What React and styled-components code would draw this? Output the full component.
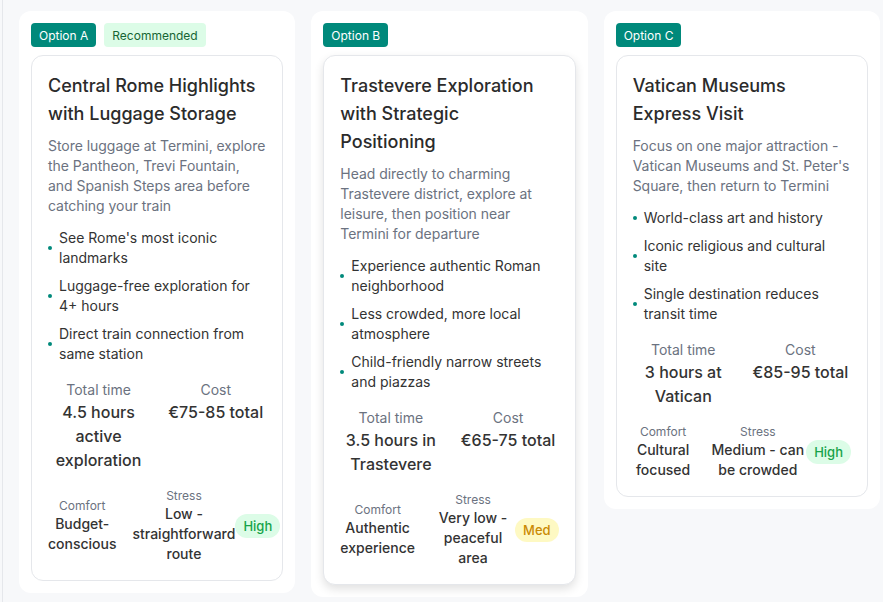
import React from 'react';
import styled, { createGlobalStyle } from 'styled-components';

const GlobalStyle = createGlobalStyle`
    * {
        box-sizing: border-box;
    }

    body {
        margin: 0;
        background: #f7f8fa;
        font-family: Inter, "Noto Sans", sans-serif;
        color: #2b2b2b;
    }
`;

const Board = styled.div`
    margin-left: 2px;
    border-left: 1px solid #e5e7eb;
    padding: 11px 3px 6px 16px;
    min-height: 602px;
    display: grid;
    grid-template-columns: repeat(3, minmax(0, 1fr));
    gap: 16px;
    align-items: start;
`;

const Column = styled.div`
    background: #ffffff;
    border-radius: 12px;
    padding: 12px;
`;

const Tags = styled.div`
    display: flex;
    gap: 8px;
    margin-bottom: 8px;
`;

const Tag = styled.span`
    display: inline-flex;
    align-items: center;
    height: 24px;
    padding: 0 8px;
    border-radius: 4px;
    font-size: 12px;
    background: ${({ $soft }) => ($soft ? '#dcfce7' : '#00897b')};
    color: ${({ $soft }) => ($soft ? '#166534' : '#ffffff')};
`;

const Card = styled.div`
    border: 1px solid #e5e7eb;
    border-radius: 12px;
    padding: 16px;
    background: #ffffff;
    box-shadow: ${({ $active }) => ($active ? '0 4px 10px rgba(0, 0, 0, 0.12)' : 'none')};
`;

const Title = styled.h3`
    margin: 0;
    font-size: 18px;
    line-height: 28px;
    font-weight: 500;
    color: #2b2b2b;
`;

const Desc = styled.p`
    margin: 8px 0 0;
    font-size: 14px;
    line-height: 20px;
    letter-spacing: -0.04px;
    color: #6b7280;
`;

const Points = styled.ul`
    list-style: none;
    margin: 12px 0 0;
    padding: 0;
    display: flex;
    flex-flow: column;
    gap: 8px;
`;

const Point = styled.li`
    display: flex;
    align-items: center;
    gap: 7px;
    font-size: 14px;
    line-height: 20px;
    color: #333333;

    &::before {
        content: '';
        flex: 0 0 4px;
        height: 4px;
        border-radius: 50%;
        background: #00897b;
    }
`;

const Stats = styled.div`
    margin-top: 16px;
    display: grid;
    grid-template-columns: 1fr 1fr;
    gap: 16px;
    text-align: center;
`;

const StatLabel = styled.div`
    font-size: 14px;
    line-height: 20px;
    color: #6b7280;
`;

const StatValue = styled.div`
    font-size: 16px;
    line-height: 24px;
    font-weight: 500;
    color: #333333;
`;

const Footer = styled.div`
    margin-top: 16px;
    display: flex;
    align-items: center;
`;

const Metric = styled.div`
    text-align: center;

    &:first-child {
        margin-right: 16px;
    }
`;

const MetricLabel = styled.div`
    font-size: 12px;
    line-height: 16px;
    color: #6b7280;
`;

const MetricValue = styled.div`
    font-size: 14px;
    line-height: 20px;
    font-weight: 500;
    color: #333333;
`;

const levels = {
    High: { bg: '#dcfce7', fg: '#16a34a' },
    Med: { bg: '#fef9c3', fg: '#ca8a04' },
};

const Level = styled.span`
    flex-shrink: 0;
    white-space: nowrap;
    height: 24px;
    padding: 0 8px;
    display: inline-flex;
    align-items: center;
    border-radius: 12px;
    font-size: 13px;
    font-weight: 500;
    background: ${({ $level }) => levels[$level].bg};
    color: ${({ $level }) => levels[$level].fg};
`;

const options = [
    {
        id: 'A',
        recommended: true,
        title: 'Central Rome Highlights with Luggage Storage',
        desc: 'Store luggage at Termini, explore the Pantheon, Trevi Fountain, and Spanish Steps area before catching your train',
        points: [
            "See Rome's most iconic landmarks",
            'Luggage-free exploration for 4+ hours',
            'Direct train connection from same station',
        ],
        time: '4.5 hours active exploration',
        cost: '€75-85 total',
        comfort: 'Budget-conscious',
        stress: 'Low - straightforward route',
        level: 'High',
    },
    {
        id: 'B',
        active: true,
        title: 'Trastevere Exploration with Strategic Positioning',
        desc: 'Head directly to charming Trastevere district, explore at leisure, then position near Termini for departure',
        points: [
            'Experience authentic Roman neighborhood',
            'Less crowded, more local atmosphere',
            'Child-friendly narrow streets and piazzas',
        ],
        time: '3.5 hours in Trastevere',
        cost: '€65-75 total',
        comfort: 'Authentic experience',
        stress: 'Very low - peaceful area',
        level: 'Med',
    },
    {
        id: 'C',
        title: 'Vatican Museums Express Visit',
        desc: "Focus on one major attraction - Vatican Museums and St. Peter's Square, then return to Termini",
        points: [
            'World-class art and history',
            'Iconic religious and cultural site',
            'Single destination reduces transit time',
        ],
        time: '3 hours at Vatican',
        cost: '€85-95 total',
        comfort: 'Cultural focused',
        stress: 'Medium - can be crowded',
        level: 'High',
    },
];

const App = () => {
    return (
        <>
            <GlobalStyle />
            <Board>
                {options.map((option) => (
                    <Column key={option.id}>
                        <Tags>
                            <Tag>Option {option.id}</Tag>
                            {option.recommended && <Tag $soft>Recommended</Tag>}
                        </Tags>
                        <Card $active={option.active}>
                            <Title>{option.title}</Title>
                            <Desc>{option.desc}</Desc>
                            <Points>
                                {option.points.map((point) => (
                                    <Point key={point}>{point}</Point>
                                ))}
                            </Points>
                            <Stats>
                                <div>
                                    <StatLabel>Total time</StatLabel>
                                    <StatValue>{option.time}</StatValue>
                                </div>
                                <div>
                                    <StatLabel>Cost</StatLabel>
                                    <StatValue>{option.cost}</StatValue>
                                </div>
                            </Stats>
                            <Footer>
                                <Metric>
                                    <MetricLabel>Comfort</MetricLabel>
                                    <MetricValue>{option.comfort}</MetricValue>
                                </Metric>
                                <Metric>
                                    <MetricLabel>Stress</MetricLabel>
                                    <MetricValue>{option.stress}</MetricValue>
                                </Metric>
                                <Level $level={option.level}>{option.level}</Level>
                            </Footer>
                        </Card>
                    </Column>
                ))}
            </Board>
        </>
    );
};

export default App;
